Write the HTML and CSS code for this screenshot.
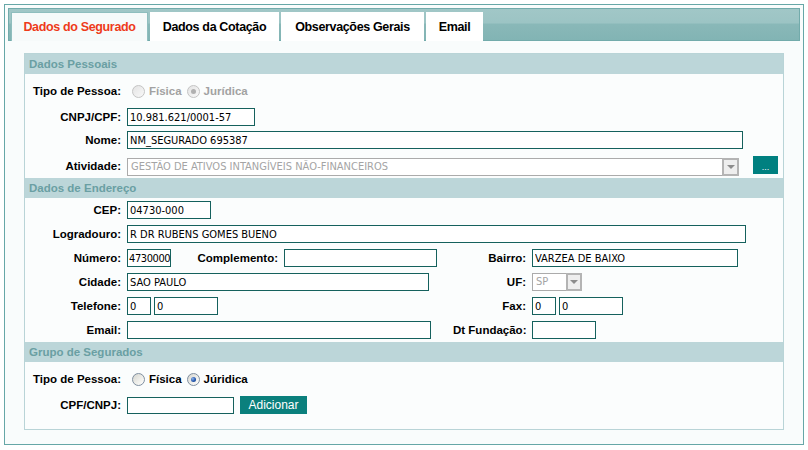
FILE: index.html
```html
<!DOCTYPE html>
<html lang="pt">
<head>
<meta charset="utf-8">
<title>Dados do Segurado</title>
<link rel="stylesheet" href="styles.css">
</head>
<body>
<div class="frame">
  <div class="tabbar">
    <div class="tab active t1">Dados do Segurado</div>
    <div class="tab t2">Dados da Cotação</div>
    <div class="tab t3">Observações Gerais</div>
    <div class="tab t4">Email</div>
  </div>

  <div class="panel">
    <div class="sec-head">Dados Pessoais</div>
    <div class="sec-body sb1">
      <div class="row h26">
        <span class="lbl">Tipo de Pessoa:</span>
        <div class="radios disabled">
          <span class="radio"></span><span class="rtext">Física</span>
          <span class="radio checked"></span><span class="rtext">Jurídica</span>
        </div>
      </div>
      <div class="row h26">
        <span class="lbl">CNPJ/CPF:</span>
        <input class="inp w-cnpj" type="text" value="10.981.621/0001-57">
      </div>
      <div class="row h20">
        <span class="lbl">Nome:</span>
        <input class="inp w-nome" type="text" value="NM_SEGURADO 695387">
      </div>
      <div class="row row-ativ">
        <span class="lbl lbl-ativ">Atividade:</span>
        <div class="select w-ativ"><span class="sel-text">GESTÃO DE ATIVOS INTANGÍVEIS NÃO-FINANCEIROS</span><span class="sel-arrow"></span></div>
        <button class="btn-dots" type="button">...</button>
      </div>
    </div>

    <div class="sec-head">Dados de Endereço</div>
    <div class="sec-body sb2">
      <div class="row">
        <span class="lbl">CEP:</span>
        <input class="inp w-cep" type="text" value="04730-000">
      </div>
      <div class="row">
        <span class="lbl">Logradouro:</span>
        <input class="inp w-logr" type="text" value="R DR RUBENS GOMES BUENO">
      </div>
      <div class="row">
        <span class="lbl">Número:</span>
        <div class="col2">
          <input class="inp w-num" type="text" value="4730000">
          <span class="lbl lbl-compl">Complemento:</span>
          <input class="inp w-compl" type="text" value="">
        </div>
        <span class="lbl lbl-r">Bairro:</span>
        <input class="inp w-bairro" type="text" value="VARZEA DE BAIXO">
      </div>
      <div class="row">
        <span class="lbl">Cidade:</span>
        <div class="col2">
          <input class="inp w-cidade" type="text" value="SAO PAULO">
        </div>
        <span class="lbl lbl-r">UF:</span>
        <div class="select w-uf"><span class="sel-text">SP</span><span class="sel-arrow"></span></div>
      </div>
      <div class="row">
        <span class="lbl">Telefone:</span>
        <div class="col2 phone">
          <input class="inp w-ddd" type="text" value="0">
          <input class="inp w-tel" type="text" value="0">
        </div>
        <span class="lbl lbl-r">Fax:</span>
        <div class="phone">
          <input class="inp w-ddd" type="text" value="0">
          <input class="inp w-tel" type="text" value="0">
        </div>
      </div>
      <div class="row">
        <span class="lbl">Email:</span>
        <div class="col2">
          <input class="inp w-email" type="text" value="">
        </div>
        <span class="lbl lbl-r">Dt Fundação:</span>
        <input class="inp w-tel" type="text" value="">
      </div>
    </div>

    <div class="sec-head">Grupo de Segurados</div>
    <div class="sec-body sb3">
      <div class="row h26">
        <span class="lbl">Tipo de Pessoa:</span>
        <div class="radios">
          <span class="radio"></span><span class="rtext">Física</span>
          <span class="radio checked"></span><span class="rtext">Júridica</span>
        </div>
      </div>
      <div class="row row-cpf">
        <span class="lbl lbl-cpf">CPF/CNPJ:</span>
        <input class="inp w-cpf" type="text" value="">
        <button class="btn-add" type="button">Adicionar</button>
      </div>
    </div>
  </div>
</div>
</body>
</html>
```

FILE: styles.css
```css
body {
  margin: 0;
  background: #ffffff;
  font-family: "Liberation Sans", Arial, sans-serif;
  color: #000;
}

.frame {
  margin: 4px;
  width: 800px;
  height: 441px;
  box-sizing: border-box;
  border: 1px solid #66a7a7;
  padding: 3px;
  background: #f9fcfc;
}

/* ---------- tabs ---------- */
.tabbar {
  height: 33px;
  box-sizing: border-box;
  border: 1px solid #72abab;
  padding: 3px 0 0 2px;
  display: flex;
  gap: 2px;
  align-items: flex-start;
  background: linear-gradient(#a1c7c7 0%, #9cc4c4 44%, #89b8b8 50%, #82b4b4 100%);
}

.tab {
  height: 29px;
  box-sizing: border-box;
  background: #ffffff;
  display: flex;
  align-items: center;
  justify-content: center;
  font: bold 12.5px "Liberation Sans", Arial, sans-serif;
  letter-spacing: -0.35px;
  color: #000;
}

.tab.active {
  background: #f6fafa;
  border: 1px solid #8fbebe;
  border-bottom: none;
  color: #ee3a1a;
}

.t1 { width: 137px; }
.t2 { width: 129px; }
.t3 { width: 143px; }
.t4 { width: 57px; }

/* ---------- panel ---------- */
.panel {
  margin: 12px 16px 0;
  border: 1px solid #b9d4d7;
  background: #fbfdfd;
}

.sec-head {
  height: 20px;
  background: #bcd6d9;
  color: #6a9fa3;
  font: bold 11.5px/20px "Liberation Sans", Arial, sans-serif;
  padding-left: 4px;
}

.sec-body {
  box-sizing: border-box;
}

.sb1 { height: 104px; padding-top: 4px; }
.sb2 { height: 144px; }
.sb3 { height: 67px; padding-top: 4px; }

.row {
  display: flex;
  align-items: center;
  gap: 6px;
  height: 24px;
}

.h26 { height: 26px; }
.h20 { height: 20px; }

.lbl {
  flex: none;
  width: 96px;
  text-align: right;
  font: bold 11.5px "Liberation Sans", Arial, sans-serif;
  white-space: nowrap;
}

.col2 {
  flex: none;
  width: 320px;
  display: flex;
  align-items: center;
}

.lbl-r { width: 73px; }
.lbl-compl { width: 107px; margin-right: 6px; }

.phone {
  display: flex;
  align-items: center;
  gap: 3px;
}

/* ---------- inputs ---------- */
.inp {
  flex: none;
  box-sizing: border-box;
  height: 18px;
  margin: 0;
  border: 1px solid #15615d;
  padding: 0 2px;
  background: #ffffff;
  color: #000;
  font: 11px "DejaVu Sans Condensed", "DejaVu Sans", "Liberation Sans", sans-serif;
  font-stretch: condensed;
  outline: none;
}

.w-cnpj { width: 128px; }
.w-nome { width: 616px; }
.w-cep { width: 84px; }
.w-logr { width: 619px; }
.w-num { width: 44px; padding: 0 0 0 1px; letter-spacing: -0.4px; }
.w-compl { width: 153px; }
.w-bairro { width: 206px; }
.w-cidade { width: 302px; }
.w-ddd { width: 24px; }
.w-tel { width: 64px; }
.w-email { width: 304px; }
.w-cpf { width: 107px; height: 17px; }

/* ---------- select ---------- */
.select {
  flex: none;
  box-sizing: border-box;
  height: 18px;
  display: flex;
  border: 1px solid #ababab;
  background: #ffffff;
}

.sel-text {
  flex: 1;
  padding-left: 3px;
  color: #a4a4a4;
  font: 11px/16px "DejaVu Sans Condensed", "DejaVu Sans", "Liberation Sans", sans-serif;
  font-stretch: condensed;
  white-space: nowrap;
  overflow: hidden;
}

.sel-arrow {
  flex: none;
  width: 17px;
  box-sizing: border-box;
  margin: -1px -1px -1px 0;
  border: 2px solid #b4b4b4;
  background: #eeeeee;
  display: flex;
  align-items: center;
  justify-content: center;
}

.sel-arrow::after {
  content: "";
  border-left: 4px solid transparent;
  border-right: 4px solid transparent;
  border-top: 4px solid #8c8c8c;
}

.w-ativ { width: 612px; }
.w-uf { width: 50px; }
.w-uf .sel-arrow { width: 16px; }

.row-ativ {
  height: 28px;
  align-items: flex-start;
}
.lbl-ativ { margin-top: 8px; line-height: 17px; }
.row-ativ .select { margin-top: 8px; }

.btn-dots {
  flex: none;
  margin: 6px 0 0 8px;
  width: 25px;
  height: 18px;
  padding: 5px 0 0;
  border: none;
  background: #008080;
  color: #ffffff;
  font: 9px/13px "Liberation Sans", Arial, sans-serif;
  text-align: center;
}

/* ---------- radios ---------- */
.radios {
  display: flex;
  align-items: center;
}

.radio {
  flex: none;
  width: 13px;
  height: 13px;
  box-sizing: border-box;
  border-radius: 50%;
  border: 1px solid #7f8fa0;
  background: linear-gradient(135deg, #d6d6d0 0%, #f0f0ec 60%, #ffffff 100%);
  margin: 0 4px 0 5px;
  position: relative;
}

.radio.checked::after {
  content: "";
  position: absolute;
  left: 3px;
  top: 3px;
  width: 5px;
  height: 5px;
  border-radius: 50%;
  background: radial-gradient(circle at 35% 35%, #8fb4e8 0%, #2458b0 55%, #163a78 100%);
}

.radios.disabled .radio {
  border-color: #c4c4c4;
  background: linear-gradient(135deg, #e4e4e4 0%, #f2f2f2 70%, #fafafa 100%);
}

.radios.disabled .radio.checked::after {
  background: #b0b0b0;
}

.rtext {
  font: bold 11.5px "Liberation Sans", Arial, sans-serif;
  color: #000;
}

.radios.disabled .rtext { color: #a2a2a2; }

/* ---------- grupo ---------- */
.row-cpf {
  height: 26px;
  align-items: flex-start;
}
.lbl-cpf { margin-top: 5px; line-height: 17px; }
.row-cpf .inp { margin-top: 5px; }

.btn-add {
  flex: none;
  margin-top: 4px;
  width: 67px;
  height: 18px;
  padding: 0;
  border: none;
  background: #0b807d;
  color: #ffffff;
  font: 12px/18px "Liberation Sans", Arial, sans-serif;
  text-align: center;
}
```
